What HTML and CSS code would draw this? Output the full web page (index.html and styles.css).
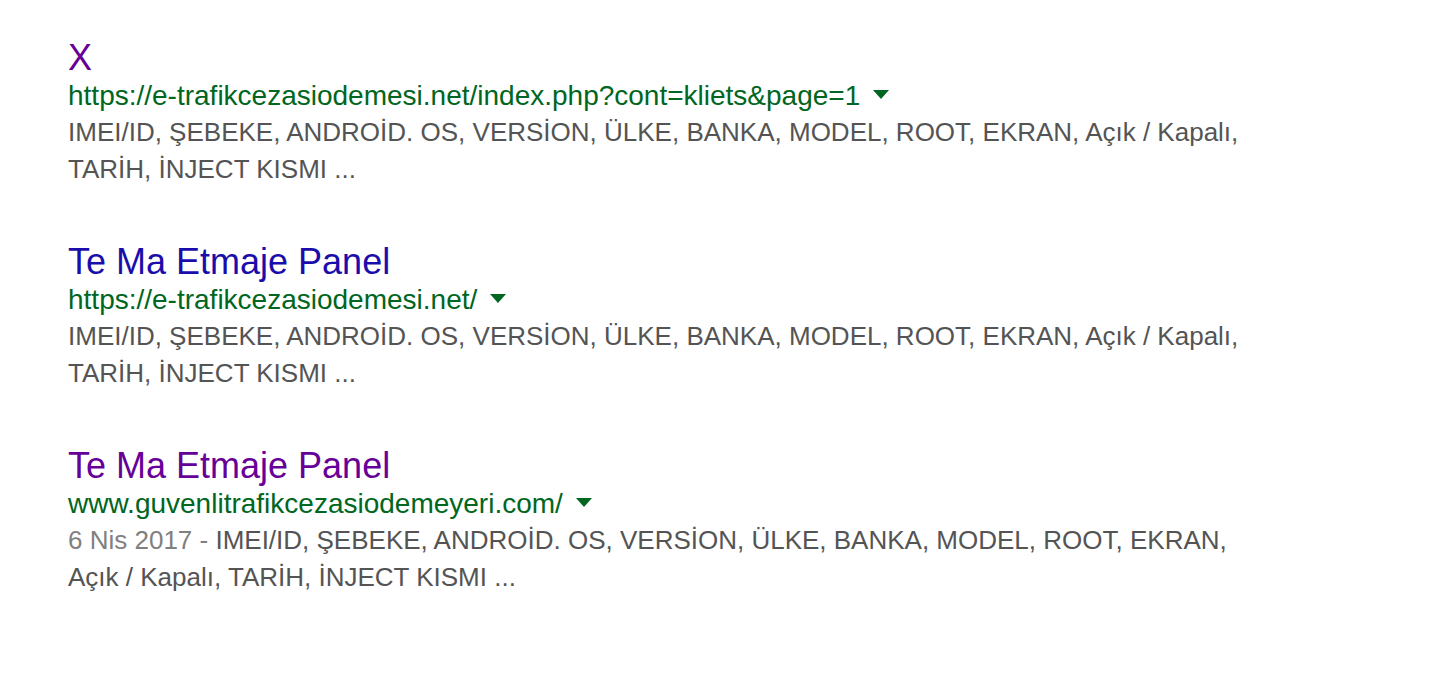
FILE: index.html
```html
<!DOCTYPE html>
<html lang="tr">
<head>
<meta charset="utf-8">
<link rel="stylesheet" href="styles.css">
</head>
<body>
<div class="results">
  <div class="result">
    <div class="title visited">X</div>
    <div class="url">https://e-trafikcezasiodemesi.net/index.php?cont=kliets&amp;page=1<span class="arrow"></span></div>
    <div class="snippet">IMEI/ID, ŞEBEKE, ANDROİD. OS, VERSİON, ÜLKE, BANKA, MODEL, ROOT, EKRAN, Açık / Kapalı,<br>TARİH, İNJECT KISMI ...</div>
  </div>
  <div class="result">
    <div class="title">Te Ma Etmaje Panel</div>
    <div class="url">https://e-trafikcezasiodemesi.net/<span class="arrow"></span></div>
    <div class="snippet">IMEI/ID, ŞEBEKE, ANDROİD. OS, VERSİON, ÜLKE, BANKA, MODEL, ROOT, EKRAN, Açık / Kapalı,<br>TARİH, İNJECT KISMI ...</div>
  </div>
  <div class="result">
    <div class="title visited">Te Ma Etmaje Panel</div>
    <div class="url">www.guvenlitrafikcezasiodemeyeri.com/<span class="arrow"></span></div>
    <div class="snippet"><span class="date">6 Nis 2017 - </span>IMEI/ID, ŞEBEKE, ANDROİD. OS, VERSİON, ÜLKE, BANKA, MODEL, ROOT, EKRAN,<br>Açık / Kapalı, TARİH, İNJECT KISMI ...</div>
  </div>
</div>
</body>
</html>
```
FILE: styles.css
```css
html, body {
  margin: 0;
  padding: 0;
  background: #fff;
}
body {
  font-family: "Liberation Sans", Arial, sans-serif;
}
.results {
  padding: 38px 0 0 68px;
  display: flex;
  flex-direction: column;
  gap: 54px;
}
.title {
  font-size: 36px;
  line-height: 40px;
  color: #1a0dab;
}
.title.visited {
  color: #660099;
}
.url {
  font-size: 28px;
  line-height: 36px;
  color: #006621;
  white-space: nowrap;
}
.arrow {
  display: inline-block;
  width: 0;
  height: 0;
  border-left: 8px solid transparent;
  border-right: 8px solid transparent;
  border-top: 9px solid #006621;
  margin-left: 13px;
  vertical-align: middle;
  position: relative;
  top: -3px;
}
.snippet {
  font-size: 26px;
  line-height: 37px;
  color: #545454;
  white-space: nowrap;
}
.date {
  color: #808080;
}
```
